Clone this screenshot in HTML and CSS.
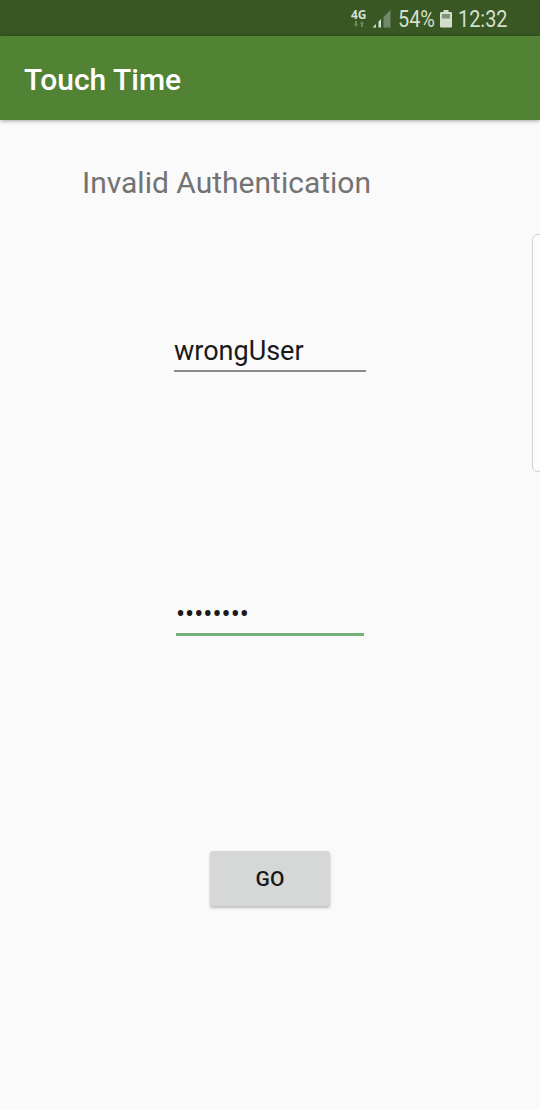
FILE: index.html
```html
<!DOCTYPE html>
<html lang="en">
<head>
<meta charset="utf-8">
<title>Touch Time</title>
<link rel="stylesheet" href="styles.css">
</head>
<body>
<div class="screen">
  <div class="statusbar">
    <div class="network"><span class="network-type">4G</span>
      <svg class="arrows" width="11" height="6" viewBox="0 0 11 6"><path d="M0 3h1V0h2v3h1L2 6zM6 3L8 0l2 3H9v3H7V3z"/></svg>
    </div>
    <svg class="signal" width="18" height="18" viewBox="0 0 18 18"><path class="on" d="M0 17.500v-.5l3-3v3.500zM5.500 17.500v-6L8 9v8.500z"/><path class="off" d="M10.500 17.500V7L17.500 0v17.500z"/></svg>
    <span class="percent"><span class="narrow">54%</span></span>
    <svg class="battery" width="13" height="18" viewBox="0 0 13 18"><path class="cell" d="M3.500 0h5v2H11q1 0 1 1v13.500q0 1-1 1H1q-1 0-1-1V3q0-1 1-1h2.500z"/><path class="empty" d="M2 4h8v4.500H2z"/></svg>
    <span class="clock"><span class="narrow">12:32</span></span>
  </div>
  <header class="appbar"><h1 class="title">Touch Time</h1></header>
  <main class="content">
    <p class="message">Invalid Authentication</p>
    <div class="field username">wrongUser</div>
    <div class="field password">••••••••</div>
    <button class="go" type="button">GO</button>
    <div class="edge-handle"></div>
  </main>
</div>
</body>
</html>
```
FILE: styles.css
```css
* { box-sizing: border-box; }
body { margin: 0; font-family: Roboto, "Liberation Sans", sans-serif; }
.screen { width: 540px; height: 1110px; display: flex; flex-direction: column; background: #fafafa; overflow: hidden; }
.statusbar { height: 36px; flex: none; background: #385723; color: #d3dfce; display: flex; align-items: flex-start; padding-left: 351px; }
.network { width: 22px; padding-top: 9px; flex: none; display: flex; flex-direction: column; }
.network-type { font: 700 12px/12px "Open Sans", sans-serif; }
.arrows { margin: 0 0 0 3px; fill: #6f895f; }
.signal { margin-top: 10px; flex: none; }
.signal .on { fill: #d3dfce; }
.signal .off { fill: #71896a; }
.percent, .clock { font-size: 23px; line-height: 26px; margin-top: 7px; flex: none; white-space: nowrap; }
.percent { width: 42px; margin-left: 7px; }
.battery { margin-top: 10px; flex: none; }
.battery .cell { fill: #d3dfce; }
.battery .empty { fill: #7e9475; }
.clock { width: 60px; margin-left: 5px; }
.narrow { display: inline-block; transform: scaleX(.865); transform-origin: left; }
.appbar { height: 84px; flex: none; display: flex; align-items: center; padding: 3px 24px 0; background: #528233; color: #fff; box-shadow: 0 1px 4px rgba(0,0,0,.35); position: relative; }
.title { margin: 0; font-size: 30px; font-weight: 500; line-height: 37px; }
.content { position: relative; flex: 1; display: flex; flex-direction: column; align-items: center; }
.message { margin: 43px 0 0 82px; align-self: flex-start; font-size: 30px; line-height: 40px; color: #737373; white-space: nowrap; }
.field { color: #191919; }
.username { width: 192px; height: 41px; margin-top: 128px; font-size: 27px; line-height: 40px; border-bottom: 2px solid #8b8b8b; }
.password { width: 188px; height: 41px; margin-top: 223px; font-size: 27px; line-height: 38px; border-bottom: 3px solid #74ae79; }
.go { width: 120px; height: 55px; margin-top: 215px; padding: 1px 0 0; border: 0; border-radius: 3px; background: #d6d7d7; color: #191919; font: 500 21px/24px Roboto, sans-serif; box-shadow: 0 2px 3px rgba(0,0,0,.25); }
.edge-handle { position: absolute; top: 114px; right: -4px; width: 12px; height: 238px; border: 1px solid #d0d0d0; border-radius: 6px; background: #fcfcfc; }
```
